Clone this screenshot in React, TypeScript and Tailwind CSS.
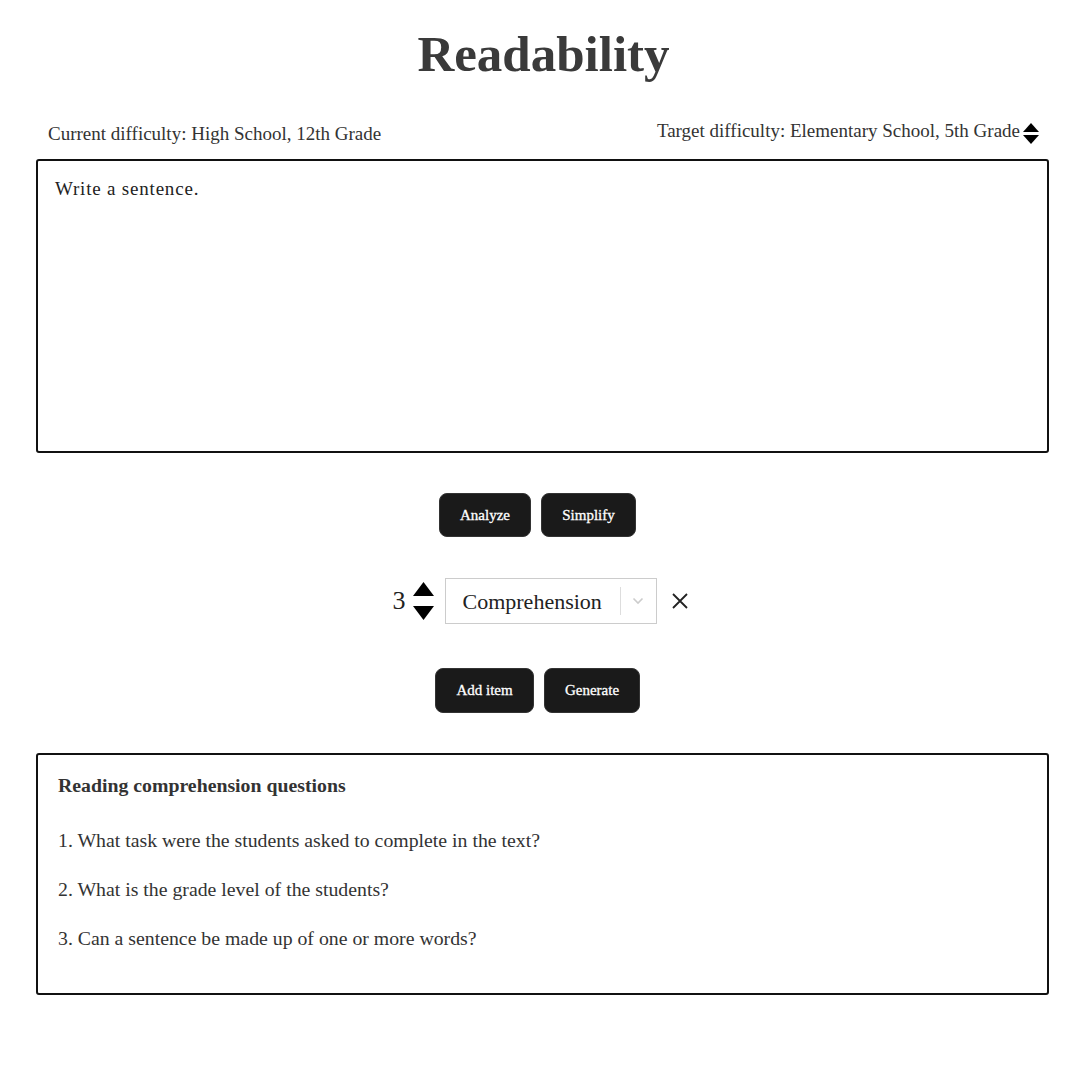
import React from "react";

const serif = { fontFamily: '"Liberation Serif", "Times New Roman", serif' };

function UpDown({ w, h, gap }: { w: number; h: number; gap: number }) {
  return (
    <svg width={w} height={h * 2 + gap} viewBox={`0 0 ${w} ${h * 2 + gap}`} className="block">
      <polygon points={`0,${h} ${w / 2},0 ${w},${h}`} fill="#000" />
      <polygon points={`0,${h + gap} ${w},${h + gap} ${w / 2},${h * 2 + gap}`} fill="#000" />
    </svg>
  );
}

const btn =
  "h-[44px] bg-[#1a1a1a] text-white rounded-[8px] text-[15px] border border-[#333] [-webkit-text-stroke:0.3px_white]";

export default function App() {
  return (
    <div className="min-h-[1080px] w-[1080px] bg-white text-[#333]" style={serif}>
      <div className="ml-[36px] w-[1013px] flex flex-col">
        <h1 className="text-center text-[51px] font-bold leading-none text-[#3a3a3a] pt-[29px] pl-[2px]">
          Readability
        </h1>
        <div className="flex justify-between items-end mt-[41px] pl-[12px] pr-[10px]">
          <div className="text-[19px] leading-none mb-[4px]">Current difficulty: High School, 12th Grade</div>
          <div className="flex items-center text-[19px] leading-none mb-[5px]">
            <span className="mb-[2px]">Target difficulty: Elementary School, 5th Grade</span>
            <span className="ml-[3px] -mb-[4px]">
              <UpDown w={16} h={9} gap={3} />
            </span>
          </div>
        </div>
        <div className="mt-[12px] h-[294px] border-2 border-[#111] rounded-[3px] px-[17px] pt-[16px]">
          <div className="text-[19px] leading-[24px] tracking-[0.8px] text-[#222]">Write a sentence.</div>
        </div>
        <div className="flex justify-center gap-[10px] mt-[40px] pr-[10px]">
          <button className={`w-[92px] ${btn}`}>Analyze</button>
          <button className={`w-[95px] ${btn}`}>Simplify</button>
        </div>
        <div className="flex justify-center items-center mt-[41px] pr-[4px]">
          <span className="text-[26px] leading-none text-[#222]">3</span>
          <span className="ml-[7px]">
            <UpDown w={21} h={14} gap={10} />
          </span>
          <div className="ml-[11px] w-[212px] h-[46px] border border-[#ccc] flex items-center">
            <span className="flex-1 pl-[17px] text-[22px] text-[#222]">Comprehension</span>
            <span className="w-px h-[28px] bg-[#ddd]" />
            <span className="w-[35px] flex justify-center">
              <svg width="12" height="8" viewBox="0 0 12 8">
                <path d="M1.5 1.5 L6 6 L10.5 1.5" stroke="#ccc" strokeWidth="1.6" fill="none" />
              </svg>
            </span>
          </div>
          <span className="ml-[14px]">
            <svg width="18" height="18" viewBox="0 0 18 18" className="block">
              <path d="M2 2 L16 16 M16 2 L2 16" stroke="#222" strokeWidth="1.8" />
            </svg>
          </span>
        </div>
        <div className="flex justify-center gap-[10px] mt-[44px] pr-[10px]">
          <button className={`w-[99px] ${btn} h-[45px]`}>Add item</button>
          <button className={`w-[96px] ${btn} h-[45px]`}>Generate</button>
        </div>
        <div className="mt-[40px] h-[242px] border-2 border-[#111] rounded-[3px] pl-[20px] pt-[18px]">
          <div className="text-[19.8px] leading-[24px] font-bold text-[#333]">Reading comprehension questions</div>
          <div className="mt-[31px] text-[19.8px] leading-[24px] text-[#333] flex flex-col gap-[25px]">
            <div>1. What task were the students asked to complete in the text?</div>
            <div>2. What is the grade level of the students?</div>
            <div>3. Can a sentence be made up of one or more words?</div>
          </div>
        </div>
      </div>
    </div>
  );
}
